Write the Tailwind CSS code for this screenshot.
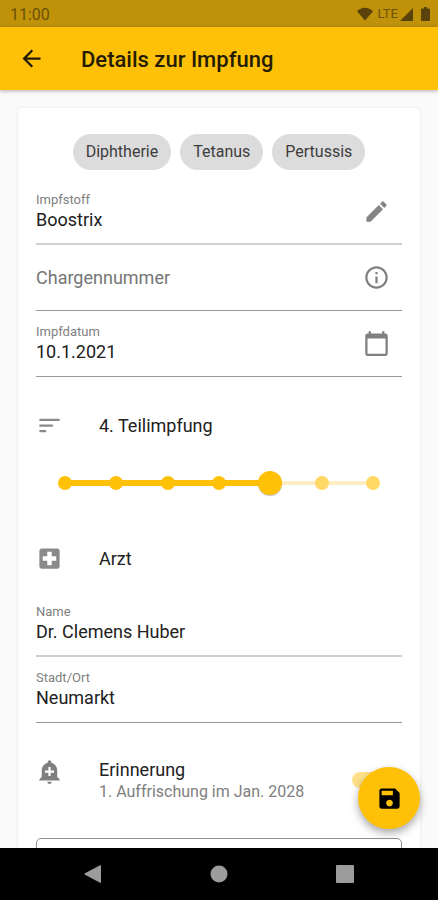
<!DOCTYPE html>
<html lang="de">
<head>
<meta charset="utf-8">
<meta name="viewport" content="width=device-width, initial-scale=1">
<title>Details zur Impfung</title>
<script src="https://cdn.jsdelivr.net/npm/@tailwindcss/browser@4"></script>
</head>
<body class="flex h-screen flex-col overflow-hidden bg-[#fafafa] font-[Roboto,sans-serif] text-[#212121]">

<!-- Status bar -->
<div class="flex h-[27px] shrink-0 items-center justify-between bg-[#c0920a] pr-2 pl-[10px] text-[#6b5106]">
  <span class="pt-[2px] text-base leading-5">11:00</span>
  <div class="flex items-center pt-px text-[#59430a]">
    <svg class="h-[14px] w-4" viewBox="0 0 16 14" fill="currentColor" aria-hidden="true"><path d="M8 13.5 0 4.2C2.2 2 5 .8 8 .8s5.800 1.200 8 3.400z"/></svg>
    <span class="ml-[5px] text-[13px] leading-5 text-[#6b5106]">LTE</span>
    <svg class="ml-[2px] size-[13px]" viewBox="0 0 13 13" fill="currentColor" aria-hidden="true"><path d="M13 0v13H0z"/></svg>
    <svg class="ml-2 h-[14px] w-[9px]" viewBox="0 0 9 14" fill="currentColor" aria-hidden="true"><path d="M3 0h3v1.500h2q1 0 1 1V13q0 1-1 1H1q-1 0-1-1V2.500q0-1 1-1h2z"/></svg>
  </div>
</div>

<!-- App bar -->
<header class="z-10 flex h-[63px] shrink-0 items-center bg-[#ffc107] px-[18px] text-[#241c05] shadow-[0_1px_4px_rgba(0,0,0,0.3)]">
  <button type="button" aria-label="Zurück">
    <svg class="size-[27px]" viewBox="0 0 24 24" fill="currentColor"><path d="M20 11H7.830l5.590-5.590L12 4l-8 8 8 8 1.410-1.410L7.830 13H20v-2z"/></svg>
  </button>
  <h1 class="ml-9 pt-[2px] text-[22px] leading-7 font-medium">Details zur Impfung</h1>
</header>

<div class="relative flex min-h-0 flex-1 flex-col">
  <main class="min-h-0 flex-1 overflow-y-auto px-[18px] pt-[18px] [scrollbar-width:none]">
    <form class="rounded-[4px] bg-white px-[18px] pt-[26px] pb-6 shadow-[0_0_3px_rgba(0,0,0,0.1)]">
      <ul class="flex justify-center gap-[9px] text-base leading-9 text-[#3c3c3c]">
        <li class="rounded-full bg-[#dcdcdc] px-[13px]">Diphtherie</li>
        <li class="rounded-full bg-[#dcdcdc] px-[13px]">Tetanus</li>
        <li class="rounded-full bg-[#dcdcdc] px-[13px]">Pertussis</li>
      </ul>

      <div class="mt-[9px] flex h-[66px] items-center border-b-2 border-[#cfcfcf] pr-3">
        <div class="flex min-w-0 flex-1 flex-col pt-[2px]">
          <label for="vaccine" class="text-[13px] leading-4 text-[#808080]">Impfstoff</label>
          <input id="vaccine" value="Boostrix" class="h-6 w-full text-[18px] leading-6 outline-none">
        </div>
        <button type="button" aria-label="Impfstoff bearbeiten" class="text-[#858585]">
          <svg class="size-[27px]" viewBox="0 0 24 24" fill="currentColor"><path d="M3 17.250V21h3.750L17.810 9.940l-3.750-3.750L3 17.250zM20.710 7.040c.39-.39.39-1.020 0-1.410l-2.340-2.340c-.39-.39-1.020-.39-1.410 0l-1.830 1.830 3.750 3.750 1.830-1.830z"/></svg>
        </button>
      </div>

      <div class="flex h-[66px] items-center border-b border-[#9a9a9a] pr-3">
        <input aria-label="Chargennummer" placeholder="Chargennummer" class="h-6 min-w-0 flex-1 text-[18px] leading-6 outline-none placeholder:text-[#757575]">
        <button type="button" aria-label="Info zur Chargennummer" class="text-[#808080]">
          <svg class="size-[27px]" viewBox="0 0 24 24" fill="currentColor"><path d="M11 7h2v2h-2zm0 4h2v6h-2zm1-9C6.480 2 2 6.480 2 12s4.480 10 10 10 10-4.480 10-10S17.520 2 12 2zm0 18c-4.410 0-8-3.590-8-8s3.590-8 8-8 8 3.590 8 8-3.590 8-8 8z"/></svg>
        </button>
      </div>

      <div class="flex h-[66px] items-center border-b border-[#9a9a9a] pr-3">
        <div class="flex min-w-0 flex-1 flex-col">
          <label for="date" class="text-[13px] leading-4 text-[#808080]">Impfdatum</label>
          <input id="date" value="10.1.2021" class="h-6 w-full text-[18px] leading-6 outline-none">
        </div>
        <button type="button" aria-label="Datum wählen" class="text-[#808080]">
          <svg class="size-[27px]" viewBox="0 0 24 24" fill="currentColor"><path d="M20 3h-1V1h-2v2H7V1H5v2H4c-1.100 0-2 .9-2 2v16c0 1.100.9 2 2 2h16c1.100 0 2-.9 2-2V5c0-1.100-.9-2-2-2zm0 18H4V7.500h16V21z"/></svg>
        </button>
      </div>

      <div class="mt-[35px] flex items-center">
        <svg class="size-[27px] text-[#8a8a8a]" viewBox="0 0 24 24" fill="currentColor" aria-hidden="true"><path d="M3 18h6v-2H3v2zM3 6v2h18V6H3zm0 7h12v-2H3v2z"/></svg>
        <label for="dose" class="ml-9 text-[18px] leading-6">4. Teilimpfung</label>
      </div>

      <div class="relative mx-[17px] mt-8 h-6">
        <div class="absolute inset-x-3 inset-y-0 flex items-center">
          <div class="h-[6px] w-2/3 bg-[#ffc107]"></div>
          <div class="h-[4px] w-1/3 bg-[#ffefc0]"></div>
        </div>
        <div class="absolute inset-x-[5px] inset-y-0 flex items-center justify-between">
          <i class="size-[14px] rounded-full bg-[#ffc107]"></i>
          <i class="size-[14px] rounded-full bg-[#ffc107]"></i>
          <i class="size-[14px] rounded-full bg-[#ffc107]"></i>
          <i class="size-[14px] rounded-full bg-[#ffc107]"></i>
          <i class="size-[14px] rounded-full bg-[#ffc107]"></i>
          <i class="size-[14px] rounded-full bg-[#ffd865]"></i>
          <i class="size-[14px] rounded-full bg-[#ffd865]"></i>
        </div>
        <input id="dose" type="range" min="0" max="6" step="1" value="4" class="absolute inset-0 h-6 w-full appearance-none bg-transparent [&::-webkit-slider-thumb]:size-6 [&::-webkit-slider-thumb]:appearance-none [&::-webkit-slider-thumb]:rounded-full [&::-webkit-slider-thumb]:bg-[#ffc107] [&::-webkit-slider-thumb]:shadow-[0_1px_1px_rgba(0,0,0,0.25)]">
      </div>

      <div class="mt-[50px] flex items-center">
        <svg class="size-[27px] text-[#8a8a8a]" viewBox="0 0 24 24" fill="currentColor" aria-hidden="true"><path d="M19 3H5c-1.100 0-1.990.9-1.990 2L3 19c0 1.100.9 2 2 2h14c1.100 0 2-.9 2-2V5c0-1.100-.9-2-2-2zm-1 11h-4v4h-4v-4H6v-4h4V6h4v4h4v4z"/></svg>
        <h2 class="ml-9 text-[18px] leading-6">Arzt</h2>
      </div>

      <div class="mt-[19px] flex h-[66px] flex-col justify-center border-b-2 border-[#cfcfcf] pt-[2px]">
        <label for="doctor" class="text-[13px] leading-4 text-[#808080]">Name</label>
        <input id="doctor" value="Dr. Clemens Huber" class="h-6 w-full text-[18px] leading-6 outline-none">
      </div>
      <div class="flex h-[66px] flex-col justify-center border-b border-[#9a9a9a]">
        <label for="city" class="text-[13px] leading-4 text-[#808080]">Stadt/Ort</label>
        <input id="city" value="Neumarkt" class="h-6 w-full text-[18px] leading-6 outline-none">
      </div>

      <div class="mt-[35px] flex items-start">
        <svg class="size-[27px] text-[#808080]" viewBox="0 0 24 24" fill="currentColor" aria-hidden="true"><path d="M10.010 21.010c0 1.100.88 1.990 1.980 1.990s1.980-.89 1.980-1.990h-3.960zm8.870-4.190V11c0-3.250-2.250-5.970-5.290-6.690v-.72C13.590 2.710 12.880 2 12 2s-1.590.71-1.590 1.590v.72C7.370 5.030 5.120 7.750 5.120 11v5.820L3 18.940V20h18v-1.060l-2.120-2.120zM16 13.010h-3v3h-2v-3H8V11h3V8h2v3h3v2.010z"/></svg>
        <label for="reminder" class="ml-9 flex-1">
          <span class="block text-[18px] leading-6">Erinnerung</span>
          <span class="block text-base leading-5 text-[#808080]">1. Auffrischung im Jan. 2028</span>
        </label>
        <input id="reminder" type="checkbox" role="switch" checked class="mr-3 h-4 w-[38px] appearance-none self-center rounded-full bg-[#ffe08a]">
      </div>

      <textarea aria-label="Notizen" class="mt-9 block h-28 w-full resize-none rounded-[5px] border border-[#8f8f8f] p-4 text-[18px] leading-6 outline-none"></textarea>
    </form>
  </main>

  <button type="button" aria-label="Speichern" class="absolute right-[18px] bottom-[19px] flex size-[62px] items-center justify-center rounded-full bg-[#ffc107] text-black shadow-[0_4px_8px_rgba(0,0,0,0.35)]">
    <svg class="size-[27px]" viewBox="0 0 24 24" fill="currentColor"><path d="M17 3H5c-1.110 0-2 .9-2 2v14c0 1.100.89 2 2 2h14c1.100 0 2-.9 2-2V7l-4-4zm-5 16c-1.660 0-3-1.340-3-3s1.340-3 3-3 3 1.340 3 3-1.340 3-3 3zm3-10H5V5h10v4z"/></svg>
  </button>
</div>

<!-- System navigation -->
<nav class="flex h-[52px] shrink-0 items-center justify-center gap-[108px] bg-black text-[#9c9c9c]">
  <button type="button" aria-label="Zurück"><svg class="size-[18px]" viewBox="0 0 18 18" fill="currentColor"><path d="M16 .3q1-.5 1 .7v16q0 1.200-1 .7L1 9.700q-1-.7 0-1.400z"/></svg></button>
  <button type="button" aria-label="Startseite"><svg class="size-[18px]" viewBox="0 0 18 18" fill="currentColor"><circle cx="9" cy="9" r="8.500"/></svg></button>
  <button type="button" aria-label="Übersicht"><svg class="size-[18px]" viewBox="0 0 18 18" fill="currentColor"><rect width="18" height="18" rx="1"/></svg></button>
</nav>
</body>
</html>
